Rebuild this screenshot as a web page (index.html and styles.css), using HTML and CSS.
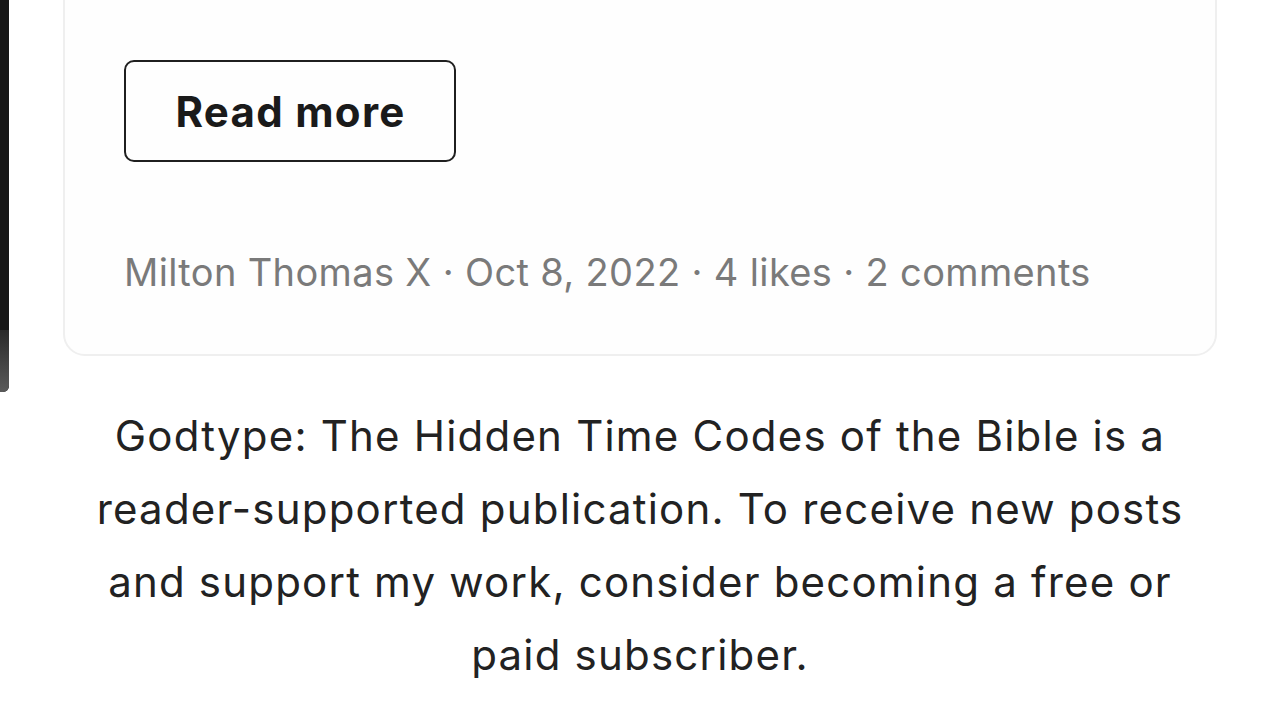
FILE: index.html
```html
<!DOCTYPE html>
<html lang="en">
<head>
<meta charset="utf-8">
<title>Godtype</title>
<link rel="stylesheet" href="styles.css">
</head>
<body>
<div class="edge-bar"><div class="edge-thumb"></div></div>
<main class="page">
  <article class="card">
    <a class="btn-read" href="#">Read more</a>
    <p class="meta">Milton Thomas X · Oct 8, 2022 · 4 likes · 2 comments</p>
  </article>
  <p class="footer-note">Godtype: The Hidden Time Codes of the Bible is a reader-supported publication. To receive new posts and support my work, consider becoming a free or paid subscriber.</p>
</main>
</body>
</html>
```

FILE: styles.css
```css
html, body {
  margin: 0;
  padding: 0;
  background: #ffffff;
}
body {
  font-family: Inter, "Noto Sans", "Liberation Sans", sans-serif;
  width: 1280px;
  height: 720px;
  overflow: hidden;
  position: relative;
}
.edge-bar {
  position: absolute;
  left: 0;
  top: 0;
  width: 9px;
  height: 392px;
  background: #161616;
  border-radius: 0 0 6px 0;
  overflow: hidden;
}
.edge-thumb {
  margin-top: 330px;
  height: 62px;
  background: linear-gradient(#2a2a2a, #5a5a5a);
}
.page {
  display: flex;
  flex-direction: column;
  align-items: center;
}
.card {
  box-sizing: border-box;
  width: 1154px;
  margin-top: -40px;
  padding: 98px 59px 0;
  height: 396px;
  border: 2px solid #efefef;
  border-radius: 22px;
  background: #fefefe;
  display: flex;
  flex-direction: column;
  align-items: flex-start;
}
.btn-read {
  box-sizing: border-box;
  width: 332px;
  height: 102px;
  border: 2px solid #1f1f1f;
  border-radius: 10px;
  display: flex;
  align-items: center;
  justify-content: center;
  padding-left: 1px;
  font-size: 42px;
  font-weight: 700;
  color: #1a1a1a;
  text-decoration: none;
  letter-spacing: 1.3px;
}
.meta {
  margin: 86px 0 0;
  font-size: 38px;
  line-height: 48px;
  color: #7a7a7a;
  letter-spacing: 0.35px;
}
.footer-note {
  width: 1110px;
  margin: 43px 0 0;
  text-align: center;
  font-size: 42px;
  line-height: 73px;
  color: #222;
  letter-spacing: 1.2px;
}
```
